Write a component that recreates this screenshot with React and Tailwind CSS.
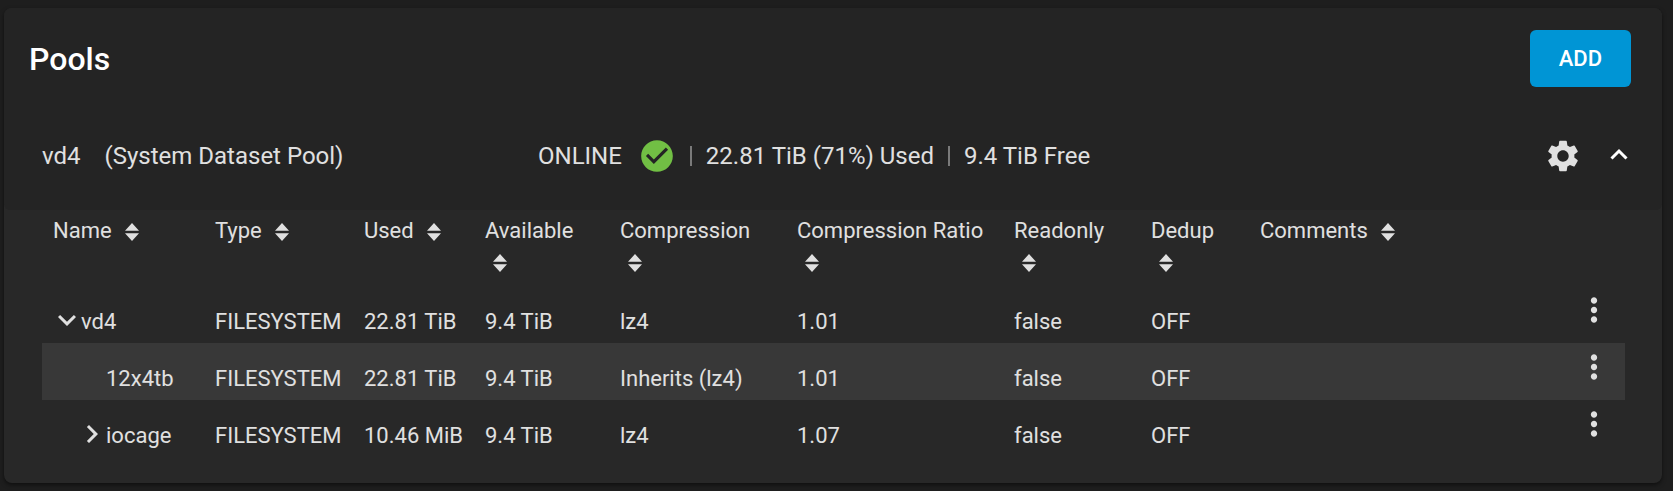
import React, { useState } from 'react'
import { MdCheckCircle, MdChevronRight, MdExpandMore, MdMoreVert, MdSettings } from 'react-icons/md'

const columns = [
    { label: 'Name', width: 'w-[162px]' },
    { label: 'Type', width: 'w-[149px]' },
    { label: 'Used', width: 'w-[121px]' },
    { label: 'Available', width: 'w-[135px]' },
    { label: 'Compression', width: 'w-[177px]' },
    { label: 'Compression Ratio', width: 'w-[217px]' },
    { label: 'Readonly', width: 'w-[137px]' },
    { label: 'Dedup', width: 'w-[109px]' },
    { label: 'Comments', width: '' }
]

const datasets = [
    { name: 'vd4', used: '22.81 TiB', compression: 'lz4', ratio: '1.01', toggle: 'open' },
    { name: '12x4tb', used: '22.81 TiB', compression: 'Inherits (lz4)', ratio: '1.01', child: true },
    { name: 'iocage', used: '10.46 MiB', compression: 'lz4', ratio: '1.07', child: true, toggle: 'closed' }
]

const SortIcon = () => (
    <svg viewBox="0 0 14 18" className="inline-block align-middle ml-2 w-[14px] h-[18px]" fill="currentColor">
        <path d="M7 0L14 7.7H0zM0 10.3h14L7 18z" />
    </svg>
)

const DatasetRow = ({ dataset, active }) => (
    <tr className={active ? 'h-[57px] bg-[#383838]' : 'h-[57px]'}>
        <td className="pt-[14px] px-[11px]">
            <div className={dataset.child ? 'flex items-center pl-[25px]' : 'flex items-center'}>
                {dataset.toggle ? (
                    <button aria-label={`Toggle ${dataset.name}`} className="w-7 h-[31px] pb-1 flex items-center justify-center">
                        {dataset.toggle === 'open' ? <MdExpandMore className="shrink-0" size={36} /> : <MdChevronRight className="shrink-0" size={36} />}
                    </button>
                ) : (
                    <span className="w-7"></span>
                )}
                <span>{dataset.name}</span>
            </div>
        </td>
        <td className="pt-[14px] px-[11px]">FILESYSTEM</td>
        <td className="pt-[14px] pl-[11px]">{dataset.used}</td>
        <td className="pt-[14px] px-[11px]">9.4 TiB</td>
        <td className="pt-[14px] px-[11px]">{dataset.compression}</td>
        <td className="pt-[14px] px-[11px]">{dataset.ratio}</td>
        <td className="pt-[14px] px-[11px]">false</td>
        <td className="pt-[14px] px-[11px]">OFF</td>
        <td></td>
        <td className="align-top pt-[5px]">
            <button aria-label={`${dataset.name} actions`} className="block">
                <MdMoreVert size={38} />
            </button>
        </td>
    </tr>
)

const App = () => {
    const [expanded, setExpanded] = useState(true)

    return (
        <div className="min-h-screen bg-[#1e1e1e] pt-2 pb-2 pl-1 pr-[11px] font-['Roboto',sans-serif] text-[#e0e0e0]">
            <main className="rounded-lg bg-[#282828] shadow-[0_2px_4px_rgba(0,0,0,0.5)]">
                <header className="flex items-center justify-between h-[101px] pl-[25px] pr-[31px] rounded-t-lg bg-[#242424]">
                    <h1 className="text-[32px] leading-[40px] font-medium text-white">Pools</h1>
                    <button className="h-[57px] px-[29px] rounded-md bg-[#0095d5] text-[22px] font-medium text-white">ADD</button>
                </header>

                <section>
                    <div className="flex items-center h-[101px] pb-2 pl-[38px] pr-[34px] rounded-b-md bg-[#242424] text-[24px] leading-[32px]">
                        <div className="flex gap-6 w-[496px]">
                            <span>vd4</span>
                            <span>(System Dataset Pool)</span>
                        </div>
                        <div className="flex items-center flex-1">
                            <span>ONLINE</span>
                            <MdCheckCircle className="ml-4 text-[#71bf44]" size={38} />
                            <span className="w-[2px] h-5 mx-[14px] bg-[#7a7a7a]"></span>
                            <span>22.81 TiB (71%) Used</span>
                            <span className="w-[2px] h-5 mx-[14px] bg-[#7a7a7a]"></span>
                            <span>9.4 TiB Free</span>
                        </div>
                        <button aria-label="Pool settings">
                            <MdSettings size={38} />
                        </button>
                        <button
                            aria-label="Toggle pool"
                            aria-expanded={expanded}
                            onClick={() => setExpanded(!expanded)}
                            className="ml-7 pb-1 text-white"
                        >
                            <svg viewBox="0 0 18 12" className="w-[18px] h-3" fill="none" stroke="currentColor" strokeWidth="3">
                                <path d="M1.5 10.5L9 3L16.500 10.5" />
                            </svg>
                        </button>
                    </div>

                    {expanded && (
                        <div className="pl-[38px] pr-[37px] pb-[26px]">
                            <table className="w-full table-fixed text-left text-[22px] leading-[31px] whitespace-nowrap">
                                <thead>
                                    <tr className="h-[76px] align-top">
                                        {columns.map((column) => (
                                            <th key={column.label} className={`${column.width} pl-[11px] pr-[10px] pt-[5px] font-normal whitespace-normal`}>
                                                {column.label} <SortIcon />
                                            </th>
                                        ))}
                                        <th className="w-[50px]"></th>
                                    </tr>
                                </thead>
                                <tbody>
                                    {datasets.map((dataset) => (
                                        <DatasetRow key={dataset.name} dataset={dataset} active={dataset.name === '12x4tb'} />
                                    ))}
                                </tbody>
                            </table>
                        </div>
                    )}
                </section>
            </main>
        </div>
    )
}

export default App
